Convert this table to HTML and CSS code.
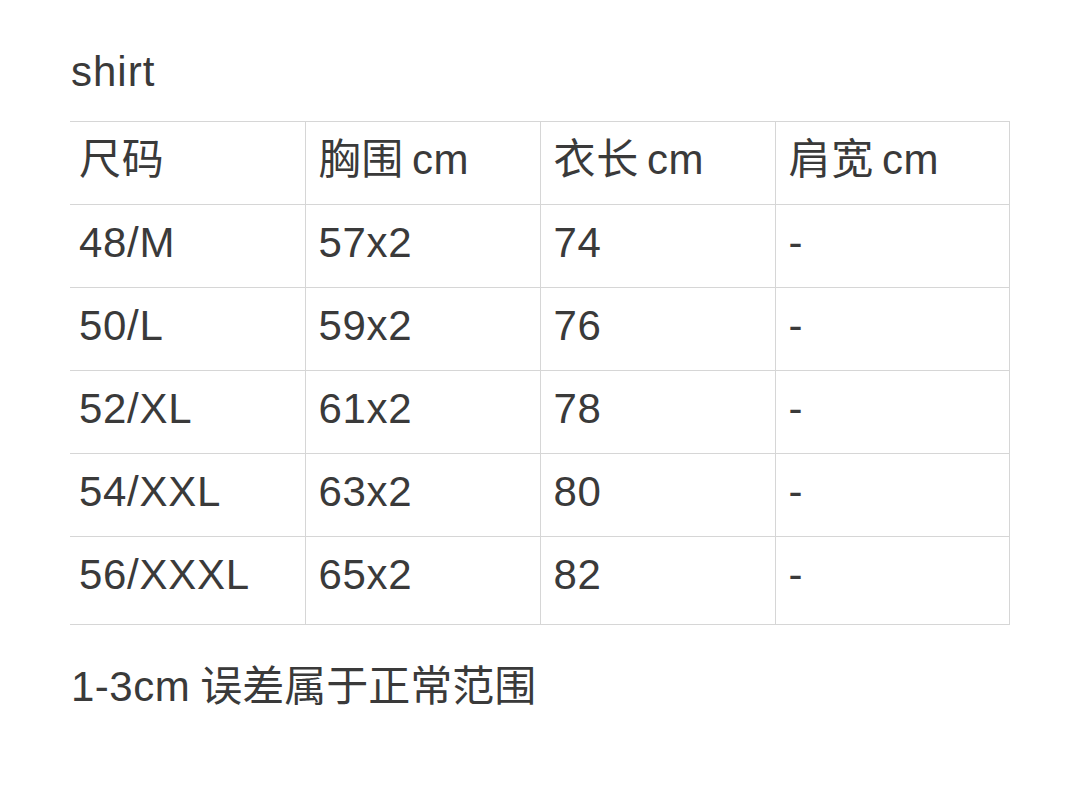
FILE: index.html
```html
<!DOCTYPE html>
<html lang="zh">
<head>
<meta charset="utf-8">
<title>shirt</title>
<link rel="stylesheet" href="styles.css">
</head>
<body>
<main class="page">
  <h1 class="title">shirt</h1>
  <table class="size-table">
    <colgroup><col class="c1"><col class="c2"><col class="c3"><col class="c4"></colgroup>
    <tr><td>尺码</td><td>胸围<span class="unit">cm</span></td><td>衣长<span class="unit">cm</span></td><td>肩宽<span class="unit">cm</span></td></tr>
    <tr><td>48/M</td><td>57x2</td><td>74</td><td>-</td></tr>
    <tr><td>50/L</td><td>59x2</td><td>76</td><td>-</td></tr>
    <tr><td>52/XL</td><td>61x2</td><td>78</td><td>-</td></tr>
    <tr><td>54/XXL</td><td>63x2</td><td>80</td><td>-</td></tr>
    <tr class="last"><td>56/XXXL</td><td>65x2</td><td>82</td><td>-</td></tr>
  </table>
  <p class="note">1-3cm<span class="cjk">误差属于正常范围</span></p>
</main>
</body>
</html>
```
FILE: styles.css
```css
html, body {
  margin: 0;
  padding: 0;
  background: #ffffff;
}
body {
  font-family: "Liberation Sans", "Noto Sans CJK SC", sans-serif;
  color: #3a3a3a;
  font-size: 42px;
  line-height: 50px;
}
.page {
  padding: 47px 0 0 71px;
}
.title {
  margin: 0 0 24px 0;
  font-size: 42px;
  font-weight: normal;
  line-height: 50px;
  letter-spacing: 1px;
}
.size-table {
  margin-left: -1px;
  width: 939px;
  table-layout: fixed;
  border-collapse: collapse;
  border-top: 1px solid #d6d6d6;
}
.size-table col { width: 235px; }
.size-table col.c4 { width: 234px; }
.size-table tr { height: 83px; }
.size-table tr.last { height: 88px; }
.size-table td {
  vertical-align: top;
  padding: 13px 0 0 13px;
  border-bottom: 1px solid #d6d6d6;
  border-right: 1px solid #d6d6d6;
  letter-spacing: 0.7px;
  white-space: nowrap;
}
.size-table td:first-child {
  padding-left: 9px;
}
.size-table .unit {
  margin-left: 8px;
}
.note {
  margin: 37px 0 0 0;
  letter-spacing: 0.5px;
}
.note .cjk {
  margin-left: 10px;
  letter-spacing: 0;
}
```
